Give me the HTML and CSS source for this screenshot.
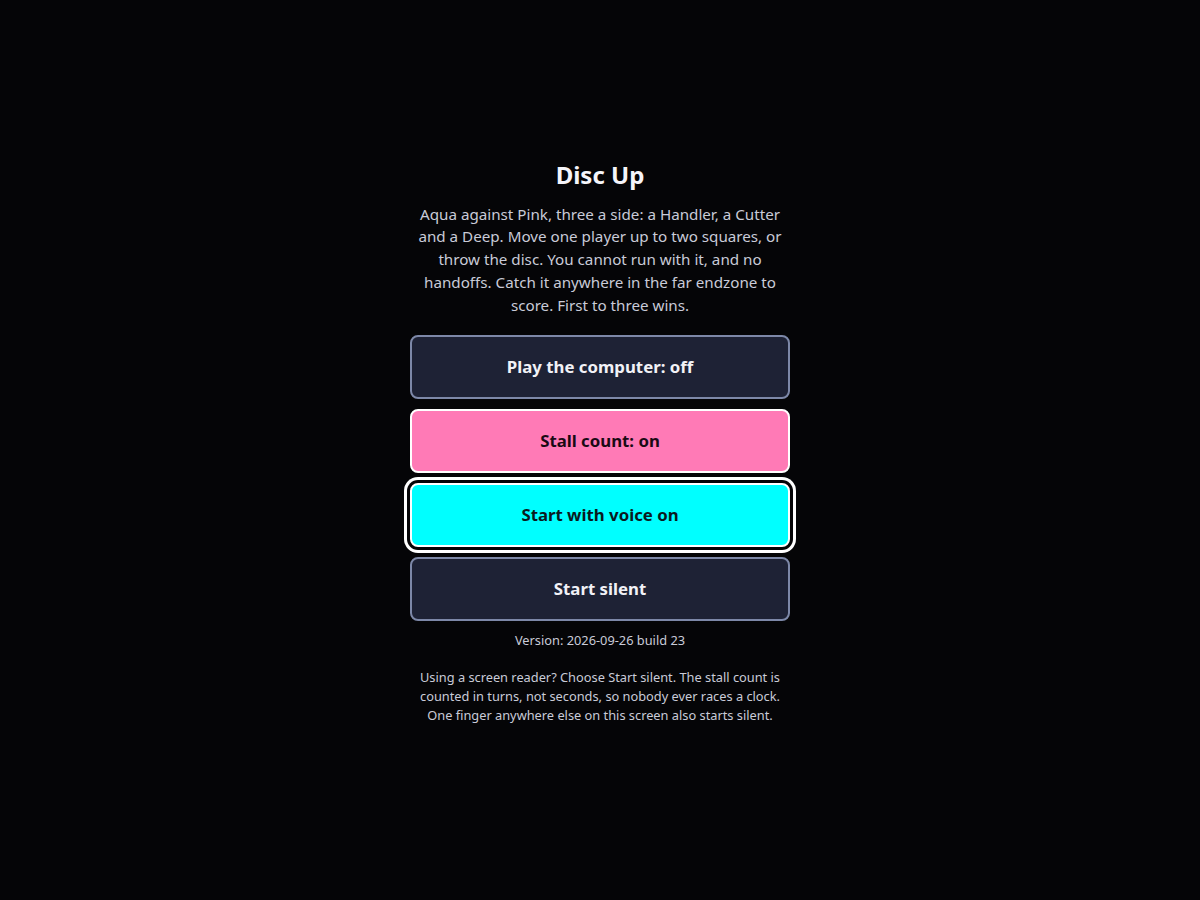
FILE: index.html
```html
<!DOCTYPE html>
<html lang="en">
<head>
<meta charset="utf-8">
<title>Disc Up</title>
<link rel="stylesheet" href="styles.css">
</head>
<body>
<main class="screen">
  <div class="panel">
    <h1 class="title">Disc Up</h1>
    <p class="intro">Aqua against Pink, three a side: a Handler, a Cutter and a Deep. Move one player up to two squares, or throw the disc. You cannot run with it, and no handoffs. Catch it anywhere in the far endzone to score. First to three wins.</p>
    <div class="buttons">
      <button class="btn btn-dark">Play the computer: off</button>
      <button class="btn btn-pink">Stall count: on</button>
      <button class="btn btn-aqua btn-focus">Start with voice on</button>
      <button class="btn btn-dark">Start silent</button>
    </div>
    <p class="version">Version: 2026-09-26 build 23</p>
    <p class="note">Using a screen reader? Choose Start silent. The stall count is counted in turns, not seconds, so nobody ever races a clock. One finger anywhere else on this screen also starts silent.</p>
  </div>
</main>
</body>
</html>
```
FILE: styles.css
```css
html, body {
  margin: 0;
  padding: 0;
  background: #050507;
}
body {
  font-family: "Noto Sans", "Open Sans", sans-serif;
  color: #f2f2f7;
}
.screen {
  box-sizing: border-box;
  min-height: 900px;
  padding-bottom: 16px;
  display: flex;
  align-items: center;
  justify-content: center;
}
.panel {
  width: 380px;
  display: flex;
  flex-direction: column;
  align-items: stretch;
  text-align: center;
}
.title {
  margin: 0 0 12px;
  font-size: 24px;
  line-height: 32px;
  font-weight: 700;
  color: #f5f5fa;
}
.intro {
  margin: 0 0 19px;
  font-size: 15.2px;
  line-height: 22.8px;
  color: #c9cbd8;
}
.buttons {
  display: flex;
  flex-direction: column;
  gap: 10px;
}
.btn {
  box-sizing: border-box;
  height: 64px;
  padding: 0 8px 2px;
  border-radius: 8px;
  border: 2px solid;
  font-family: inherit;
  font-size: 16.8px;
  font-weight: 700;
  cursor: pointer;
}
.btn-dark {
  background: #1e2235;
  border-color: #7d88a8;
  color: #f2f2f7;
}
.btn-pink {
  background: #ff7ab6;
  border-color: #ffffff;
  color: #1a0a14;
}
.btn-aqua {
  background: #00ffff;
  border-color: #ffffff;
  color: #0a1a1e;
}
.btn-focus {
  box-shadow: 0 0 0 3px #050507, 0 0 0 6px #ffffff;
}
.version {
  margin: 10px 0 0;
  font-size: 12.8px;
  line-height: 19px;
  color: #c9cbd8;
}
.note {
  margin: 18px 0 0;
  font-size: 12.8px;
  line-height: 19px;
  color: #c9cbd8;
}
```
